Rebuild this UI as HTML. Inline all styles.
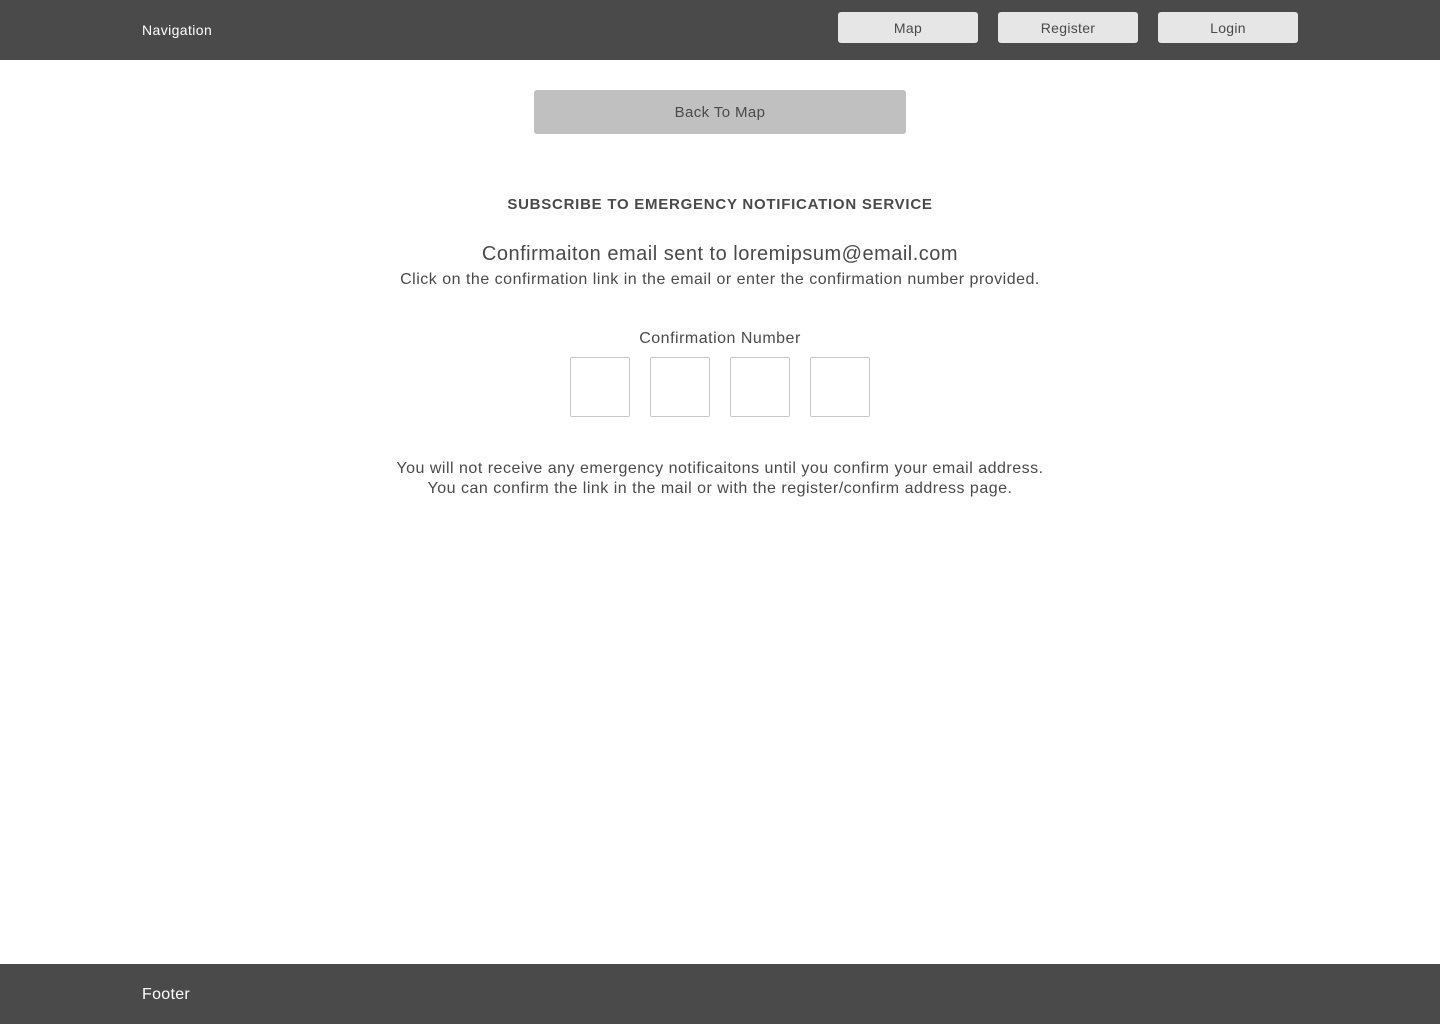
<!DOCTYPE html>
<html><head><meta charset="utf-8"><style>
*{margin:0;padding:0;box-sizing:border-box}
body{width:1440px;height:1024px;position:relative;background:#fff;font-family:"Liberation Sans",sans-serif;color:#4a4a4a;overflow:hidden}
.hdr{position:absolute;left:0;top:0;width:1440px;height:60px;background:#4a4a4a}
.nav{position:absolute;left:142px;top:22px;color:#fff;font-size:14px;letter-spacing:0.4px}
.btn{position:absolute;top:12px;width:140px;height:31px;background:#e6e6e6;border-radius:3px;font-size:14px;text-align:center;line-height:32px;color:#4a4a4a;letter-spacing:0.3px}
.back{position:absolute;left:534px;top:90px;width:372px;height:44px;background:#c0c0c0;border-radius:3px;text-align:center;line-height:45px;font-size:15px;color:#4a4a4a;letter-spacing:0.4px}
.c{position:absolute;left:0;width:1440px;text-align:center;letter-spacing:0.5px}
.box{position:absolute;top:357px;width:60px;height:60px;border:1px solid #c8c8c8;border-radius:2px}
.ftr{position:absolute;left:0;top:964px;width:1440px;height:60px;background:#4a4a4a}
.ftr span{position:absolute;left:142px;top:22px;color:#fff;font-size:16px;letter-spacing:0.3px}
</style></head><body>
<div class="hdr"><div class="nav">Navigation</div>
<div class="btn" style="left:838px">Map</div>
<div class="btn" style="left:998px">Register</div>
<div class="btn" style="left:1158px">Login</div></div>
<div class="back">Back To Map</div>
<div class="c" style="top:196px;font-size:15px;font-weight:bold;letter-spacing:0.75px">SUBSCRIBE TO EMERGENCY NOTIFICATION SERVICE</div>
<div class="c" style="top:243px;font-size:20px">Confirmaiton email sent to loremipsum@email.com</div>
<div class="c" style="top:271px;font-size:16px">Click on the confirmation link in the email or enter the confirmation number provided.</div>
<div class="c" style="top:330px;font-size:16px">Confirmation Number</div>
<div class="box" style="left:570px"></div>
<div class="box" style="left:650px"></div>
<div class="box" style="left:730px"></div>
<div class="box" style="left:810px"></div>
<div class="c" style="top:459px;font-size:16px;line-height:20px">You will not receive any emergency notificaitons until you confirm your email address.<br>You can confirm the link in the mail or with the register/confirm address page.</div>
<div class="ftr"><span>Footer</span></div>
</body></html>
